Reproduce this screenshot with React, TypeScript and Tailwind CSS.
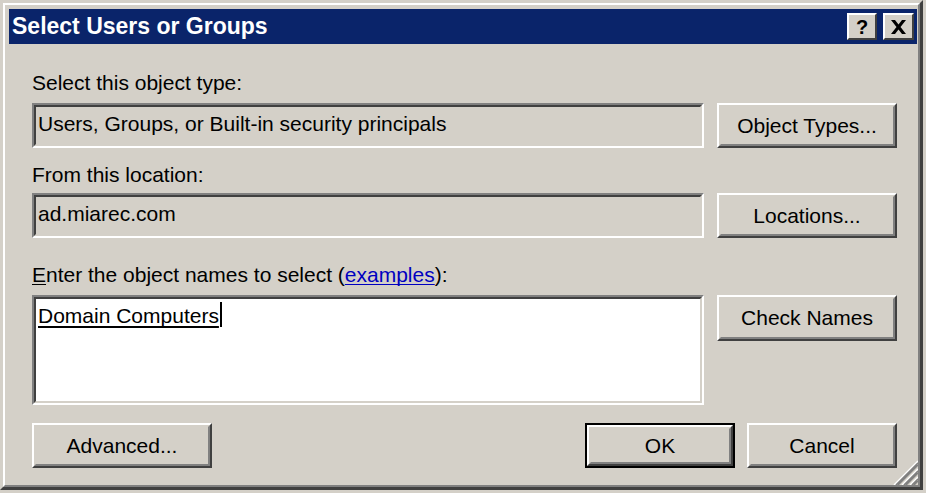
const sunken =
  "border-2 border-t-[#808080] border-l-[#808080] border-r-white border-b-white";
const sunkenInner =
  "border-2 border-t-[#404040] border-l-[#404040] border-r-[#d4d0c8] border-b-[#d4d0c8]";

function Button({ label, isDefault }: { label: string; isDefault?: boolean }) {
  const inner = (
    <div className="h-full w-full border-2 border-t-white border-l-white border-r-[#404040] border-b-[#404040]">
      <div className="h-full w-full border-2 border-t-[#d4d0c8] border-l-[#d4d0c8] border-r-[#808080] border-b-[#808080] flex items-center justify-center text-black">
        {label}
      </div>
    </div>
  );
  if (isDefault) {
    return <div className="h-[45px] w-[150px] border-2 border-black">{inner}</div>;
  }
  return inner;
}

function Field({ children, white, tall }: { children: React.ReactNode; white?: boolean; tall?: boolean }) {
  return (
    <div className={`${sunken} w-[672px] ${tall ? "h-[110px]" : "h-[45px]"}`}>
      <div className={`${sunkenInner} h-full ${white ? "bg-white" : "bg-[#d4d0c8]"} pl-[2px] pt-[5px]`}>
        {children}
      </div>
    </div>
  );
}

function TitleButton({ children }: { children: React.ReactNode }) {
  return (
    <div className="h-[27px] border-t-2 border-l-2 border-t-white border-l-white border-r-2 border-b-2 border-r-[#404040] border-b-[#404040] bg-[#d4d0c8] flex items-center justify-center">
      {children}
    </div>
  );
}

export default function App() {
  return (
    <div
      className="w-[926px] h-[493px] bg-[#d4d0c8] text-[21px] leading-[24px] text-black"
      style={{ fontFamily: '"Liberation Sans", Arial, sans-serif' }}
    >
      <div className="w-[923px] h-[490px] border-[3px] border-t-[#d4d0c8] border-l-[#d4d0c8] border-r-[#404040] border-b-[#404040]">
        <div className="relative h-full border-2 border-t-white border-l-white border-r-[#808080] border-b-[#808080] pt-[4px] pl-[4px] pr-[1px] flex flex-col">
          {/* title bar */}
          <div className="h-[35px] bg-[#0a246a] flex items-center pl-[3px] pr-[3px]">
            <div className="flex-1 text-white font-bold text-[23px] leading-[35px]">Select Users or Groups</div>
            <div className="w-[30px]">
              <TitleButton>
                <span className="font-bold text-[20px] leading-none">?</span>
              </TitleButton>
            </div>
            <div className="w-[31px] ml-[6px]">
              <TitleButton>
                <svg width="17" height="14" viewBox="0 0 17 14">
                  <path d="M1 0 H5 L8.5 4.5 L12 0 H16 L10.5 7 L16 14 H12 L8.5 9.5 L5 14 H1 L6.5 7 Z" fill="black" />
                </svg>
              </TitleButton>
            </div>
          </div>

          {/* body */}
          <div className="pl-[23px] pr-[20px]">
            <div className="mt-[27px]">Select this object type:</div>
            <div className="mt-[8px] flex gap-[13px]">
              <Field>Users, Groups, or Built-in security principals</Field>
              <div className="w-[180px] h-[45px]">
                <Button label="Object Types..." />
              </div>
            </div>

            <div className="mt-[15px]">From this location:</div>
            <div className="mt-[6px] flex gap-[13px]">
              <Field>ad.miarec.com</Field>
              <div className="w-[180px] h-[45px]">
                <Button label="Locations..." />
              </div>
            </div>

            <div className="mt-[25px]">
              <span className="underline decoration-1 underline-offset-2">E</span>nter the object names to select (
              <span className="text-[#0000c0] underline decoration-1 underline-offset-2 [text-decoration-skip-ink:none]">examples</span>):
            </div>
            <div className="mt-[8px] flex gap-[13px] items-start">
              <Field white tall>
                <div className="flex items-start">
                  <span className="underline decoration-2 underline-offset-[3px] [text-decoration-skip-ink:none]">Domain Computers</span>
                  <span className="w-[2px] h-[25px] bg-black ml-[1px] -mt-[2px]" />
                </div>
              </Field>
              <div className="w-[180px] h-[46px]">
                <Button label="Check Names" />
              </div>
            </div>

            <div className="mt-[18px] flex justify-between">
              <div className="w-[180px] h-[45px]">
                <Button label="Advanced..." />
              </div>
              <div className="flex gap-[12px]">
                <Button label="OK" isDefault />
                <div className="w-[150px] h-[45px]">
                  <Button label="Cancel" />
                </div>
              </div>
            </div>
          </div>

          {/* size grip */}
          <svg className="absolute right-0 bottom-0" width="26" height="26" viewBox="0 0 26 26">
            <path d="M26 2 L2 26" stroke="white" strokeWidth="1.5" />
            <path d="M26 4 L4 26 M26 6 L6 26" stroke="#808080" strokeWidth="1.5" />
            <path d="M26 10 L10 26" stroke="white" strokeWidth="1.5" />
            <path d="M26 12 L12 26 M26 14 L14 26" stroke="#808080" strokeWidth="1.5" />
            <path d="M26 18 L18 26" stroke="white" strokeWidth="1.5" />
            <path d="M26 20 L20 26 M26 22 L22 26" stroke="#808080" strokeWidth="1.5" />
          </svg>
        </div>
      </div>
    </div>
  );
}
